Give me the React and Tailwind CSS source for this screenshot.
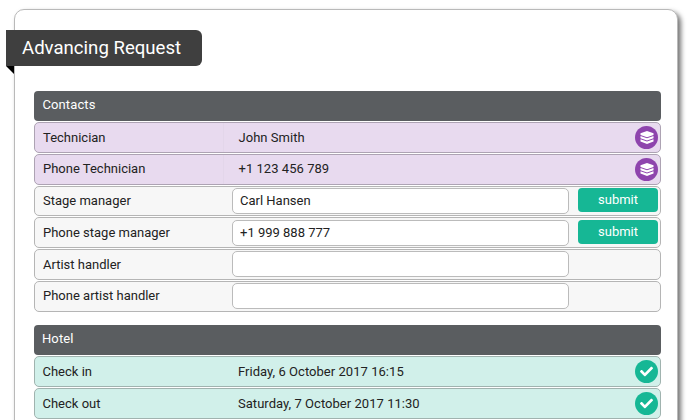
import React from 'react';
import { FaCheck } from 'react-icons/fa';

const contacts = [
  { label: 'Technician', value: 'John Smith', status: 'locked' },
  { label: 'Phone Technician', value: '+1 123 456 789', status: 'locked' },
  { label: 'Stage manager', input: 'Carl Hansen', submit: true },
  { label: 'Phone stage manager', input: '+1 999 888 777', submit: true },
  { label: 'Artist handler', input: '' },
  { label: 'Phone artist handler', input: '' },
];

const hotel = [
  { label: 'Check in', value: 'Friday, 6 October 2017 16:15', status: 'done' },
  { label: 'Check out', value: 'Saturday, 7 October 2017 11:30', status: 'done' },
];

// stacked discs, wider and flatter than the stock database glyph
function StackIcon() {
  return (
    <svg width="14" height="13" viewBox="0 0 14 13" fill="white">
      <path d="M7 0 13.5 2.2V4L7 6.2 0.5 4V2.2Z" />
      <path d="M0.5 5 7 7.2 13.5 5V7.2L7 9.4 0.5 7.2Z" />
      <path d="M0.5 8.2 7 10.4 13.5 8.2V10.6L7 13 0.5 10.6Z" />
    </svg>
  );
}

function StatusIcon({ status }) {
  if (status === 'locked') {
    return (
      <span className="flex h-[23px] w-[23px] items-center justify-center rounded-full bg-[#8e44ad]">
        <StackIcon />
      </span>
    );
  }
  return (
    <span className="flex h-[23px] w-[23px] items-center justify-center rounded-full bg-[#16b795] text-white">
      <FaCheck size={13} />
    </span>
  );
}

function Row({ row }) {
  let tone = 'border-[#b5b5b5] bg-[#f7f7f7]';
  let divider = 'border-[#f7f7f7]';
  if (row.status === 'locked') {
    tone = 'border-[#ada3b3] bg-[#e8daef]';
    divider = 'border-[#e3d6ea]';
  }
  if (row.status === 'done') {
    tone = 'border-[#a0b3af] bg-[#d1f0ea]';
    divider = 'border-[#d1f0ea]';
  }

  return (
    <div className={`mt-px flex h-[30.75px] items-center rounded-[5px] border pl-2 pr-[2px] text-[13px] text-[#222] ${tone}`}>
      <div className={`flex w-[181px] shrink-0 items-center self-stretch border-r ${divider}`}>{row.label}</div>
      {row.input !== undefined ? (
        <>
          <input
            readOnly
            value={row.input}
            className="ml-2 h-[26px] w-[337px] shrink-0 rounded-[5px] border border-[#bbb] bg-white px-[7px] text-[13px] text-[#222] outline-none"
          />
          {row.submit && (
            <button className="-mt-[2px] ml-[9px] h-[24px] w-[80px] shrink-0 rounded-[4px] bg-[#16b795] text-[13px] text-white">
              submit
            </button>
          )}
        </>
      ) : (
        <>
          <div className="ml-[14.5px] flex-1 tracking-[0.04px]">{row.value}</div>
          <StatusIcon status={row.status} />
        </>
      )}
    </div>
  );
}

function Section({ title, rows, className, headerClassName = 'pb-[2px]' }) {
  return (
    <section className={className}>
      <h2 className={`flex h-[30px] items-center rounded-[4px] bg-[#5a5d60] pl-[8.5px] text-[13px] font-normal tracking-[0.1px] text-white ${headerClassName}`}>
        {title}
      </h2>
      <div className="mt-px">
        {rows.map((row) => (
          <Row key={row.label} row={row} />
        ))}
      </div>
    </section>
  );
}

export default function App() {
  return (
    <div className="h-[420px] w-[690px] overflow-hidden bg-white pl-[14px] pt-[9px] font-['Roboto',sans-serif]">
      <div className="h-[460px] w-[664px] rounded-[10px] border border-[#b9b9b9] bg-white pt-5 shadow-[3px_3px_5px_rgba(0,0,0,0.55)]">
        <div className="relative -ml-[9px] flex h-9 w-[196px] items-center rounded-r-[6px] bg-[#3f3f3f] pt-[1px] pl-4 text-[18.6px] text-white">
          Advancing Request
          <span className="absolute left-0 top-9 h-0 w-0 border-l-[8px] border-t-[8px] border-l-transparent border-t-black" />
        </div>
        <Section title="Contacts" rows={contacts} className="ml-[19px] mr-[16px] mt-[25px]" />
        <Section title="Hotel" rows={hotel} headerClassName="pb-[4px]" className="ml-[18.5px] mr-[16px] mt-[13.75px]" />
      </div>
    </div>
  );
}
